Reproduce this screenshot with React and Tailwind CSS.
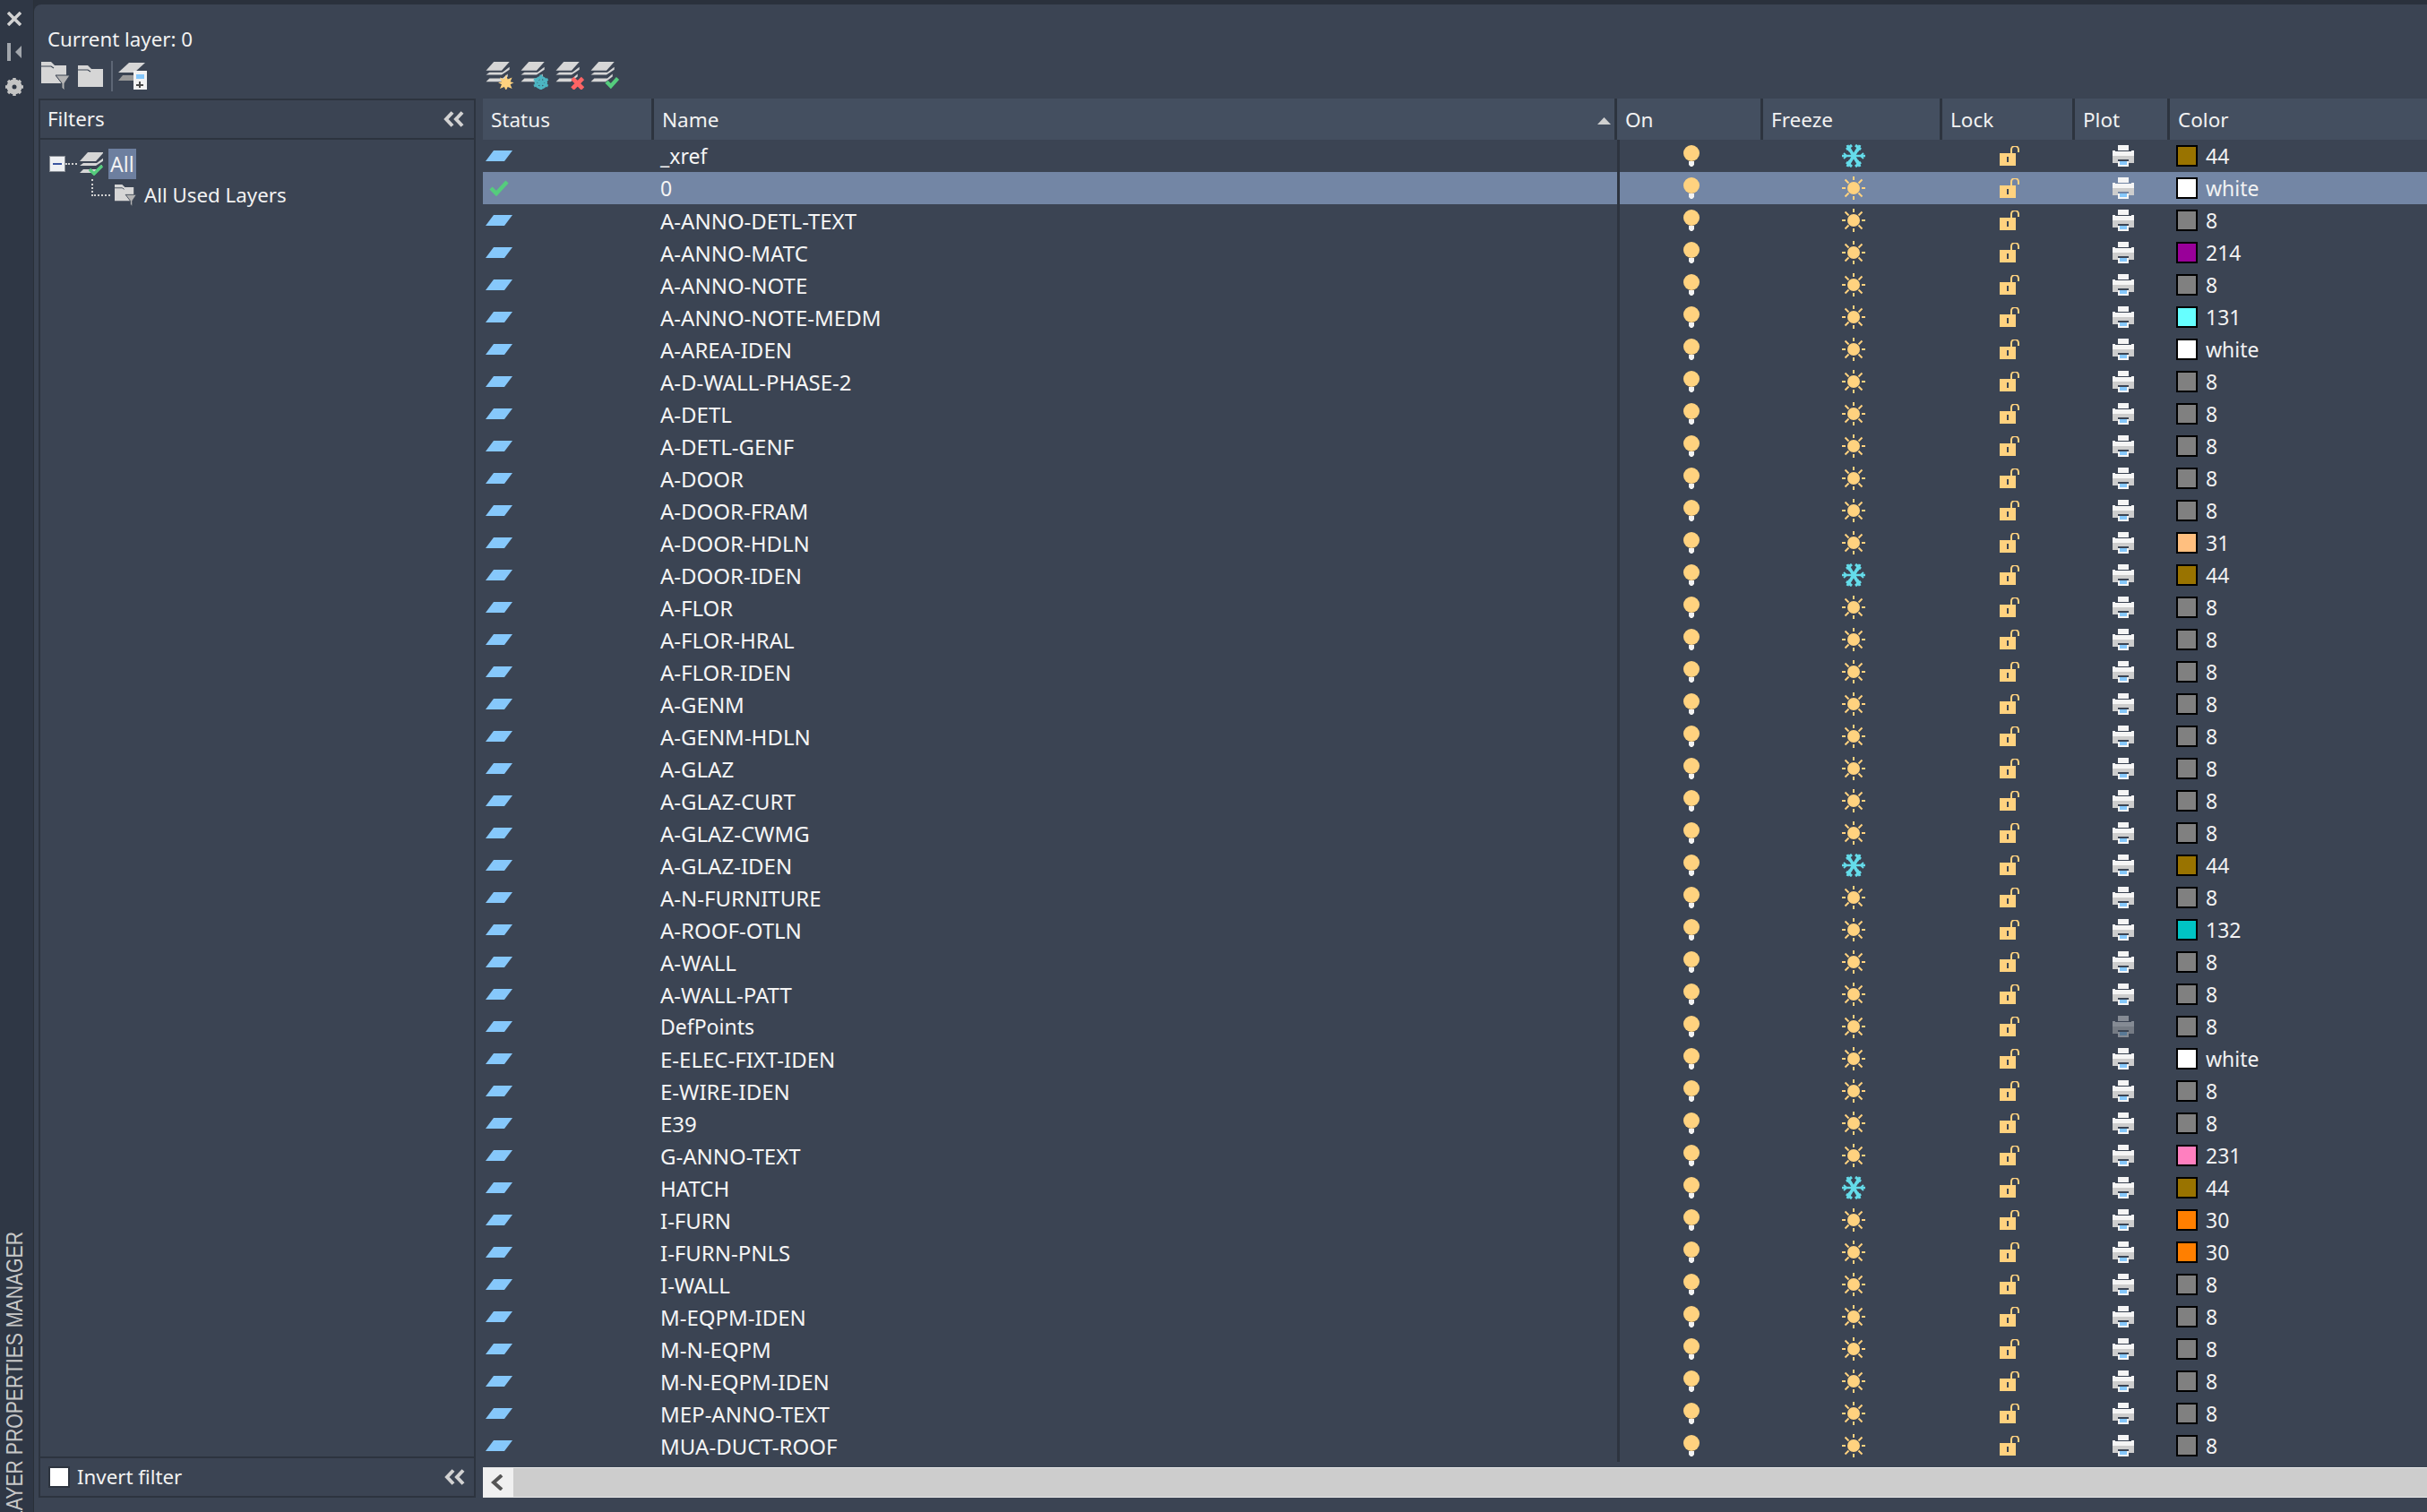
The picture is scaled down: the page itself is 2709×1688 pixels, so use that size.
const rows = [
  ["_xref", "44", true],
  ["0", "white"],
  ["A-ANNO-DETL-TEXT", "8"],
  ["A-ANNO-MATC", "214"],
  ["A-ANNO-NOTE", "8"],
  ["A-ANNO-NOTE-MEDM", "131"],
  ["A-AREA-IDEN", "white"],
  ["A-D-WALL-PHASE-2", "8"],
  ["A-DETL", "8"],
  ["A-DETL-GENF", "8"],
  ["A-DOOR", "8"],
  ["A-DOOR-FRAM", "8"],
  ["A-DOOR-HDLN", "31"],
  ["A-DOOR-IDEN", "44", true],
  ["A-FLOR", "8"],
  ["A-FLOR-HRAL", "8"],
  ["A-FLOR-IDEN", "8"],
  ["A-GENM", "8"],
  ["A-GENM-HDLN", "8"],
  ["A-GLAZ", "8"],
  ["A-GLAZ-CURT", "8"],
  ["A-GLAZ-CWMG", "8"],
  ["A-GLAZ-IDEN", "44", true],
  ["A-N-FURNITURE", "8"],
  ["A-ROOF-OTLN", "132"],
  ["A-WALL", "8"],
  ["A-WALL-PATT", "8"],
  ["DefPoints", "8", false, true],
  ["E-ELEC-FIXT-IDEN", "white"],
  ["E-WIRE-IDEN", "8"],
  ["E39", "8"],
  ["G-ANNO-TEXT", "231"],
  ["HATCH", "44", true],
  ["I-FURN", "30"],
  ["I-FURN-PNLS", "30"],
  ["I-WALL", "8"],
  ["M-EQPM-IDEN", "8"],
  ["M-N-EQPM", "8"],
  ["M-N-EQPM-IDEN", "8"],
  ["MEP-ANNO-TEXT", "8"],
  ["MUA-DUCT-ROOF", "8"],
];

const swatch = {
  44: "bg-[#997300]",
  8: "bg-[#808080]",
  white: "bg-white",
  214: "bg-[#990099]",
  131: "bg-[#66ffff]",
  31: "bg-[#ffbf7f]",
  132: "bg-[#00c4c4]",
  231: "bg-[#ff7fbf]",
  30: "bg-[#ff7f00]",
};

const Chevrons = () => (
  <svg width="24" height="18" viewBox="0 0 24 18" fill="none" stroke="#d2d2d2" strokeWidth="4">
    <path d="M10 1.5 3 9l7 7.5M21 1.5 14 9l7 7.5" />
  </svg>
);

const Layer = () => (
  <svg width="30" height="12" viewBox="0 0 30 12" className="shrink-0">
    <path d="M9 0h21l-9 12H0z" fill="#86c8fb" />
  </svg>
);

const Check = () => (
  <svg width="22" height="18" viewBox="0 0 22 18" fill="none" stroke="#55cc7d" strokeWidth="4.5">
    <path d="M2 9l6 6L20 2" />
  </svg>
);

const Bulb = () => (
  <svg width="18" height="24" viewBox="0 0 18 24" className="block">
    <circle cx="9" cy="9" r="9" fill="#ffd27f" />
    <path d="M6 18h6v4l-2 2H8l-2-2z" fill="#f2f2f2" />
  </svg>
);

const Sun = () => (
  <svg width="26" height="26" viewBox="0 0 26 26" className="block">
    <circle cx="13" cy="13" r="7" fill="#ffd27f" />
    <path
      d="M13 0v4M13 22v4M0 13h4M22 13h4M3.5 3.5l4 4M22.5 3.5l-4 4M3.5 22.5l4-4M22.5 22.5l-4-4"
      stroke="#ffd27f"
      strokeWidth="2"
    />
  </svg>
);

const Snow = () => (
  <svg width="26" height="26" viewBox="0 0 26 26" stroke="#64dcea" fill="none" strokeWidth="3.5" className="block">
    <path d="M0 13h26" strokeWidth="2.5" />
    <path d="M7 3l12 20M19 3 7 23" />
    <path d="M6 1l3 7M11 1 5 6M20 1l-3 7M15 1l6 5M6 25l3-7M11 25l-6-5M20 25l-3-7M15 25l6-5" strokeWidth="3" />
    <path d="M2 10l3 3-3 3M24 10l-3 3 3 3" strokeWidth="2" />
  </svg>
);

const Lock = () => (
  <svg width="22" height="22" viewBox="0 0 22 22" className="block">
    <path d="M0 8h18v14H0z" fill="#ffd27f" />
    <path d="M8 12h2v6H8z" fill="#3b4453" />
    <path d="M13 8V4a4 4 0 0 1 8 0v3" fill="none" stroke="#ffd27f" strokeWidth="2" />
  </svg>
);

const Printer = ({ dim }) => (
  <svg width="24" height="24" viewBox="0 0 24 24" className={dim ? "block opacity-40" : "block"}>
    <path d="M6 0h12v6H6z" fill="#f5f5f5" />
    <path d="M0 6h3v1h18V6h3v6H0z" fill="#f5f5f5" />
    <path d="M0 12h24v8h-6v-4H6v4H0z" fill="#cdcdcd" />
    <path d="M6 18h12v6H6z" fill="#f5f5f5" />
    <path d="M8 18h8v4H8z" fill="#86c8fb" />
  </svg>
);

// stacked layers, used by all the layer buttons
const Stack = () => (
  <>
    <path d="M9 0h18l-9 10H0z" fill="#d6d6d6" />
    <path d="M4 12h15l8-6v3l-9 6H0z" fill="#d6d6d6" />
    <path d="M4 19h15l6-5v3l-8 6H0z" fill="#d6d6d6" />
  </>
);

const LayerBtn = ({ children }) => (
  <svg width="32" height="31" viewBox="0 0 32 32" className="shrink-0">
    <Stack />
    {children}
  </svg>
);

const FilterFolder = ({ size = 33 }) => (
  <svg width={size} height={size} viewBox="0 0 33 33" className="shrink-0 block">
    <path d="M0 0h11l4 4h13v11H16l7 9H0z" fill="#d6d6d6" />
    <path d="M0 5h11l3 2" stroke="#3b4453" strokeWidth="1.2" fill="none" />
    <path d="M16 15h16l-6 9v8l-3-3v-5z" fill="#b4b4b4" stroke="#3b4453" strokeWidth="1" />
  </svg>
);

const App = () => {
  return (
    <div className="w-[2709px] h-[1688px] flex overflow-hidden bg-[#2a313c] text-[#f2f2f2] text-[23px] leading-none font-['Noto_Sans',sans-serif]">
      <aside className="w-[38px] shrink-0 bg-[#2f3745] flex flex-col items-start pl-[8px] overflow-hidden border-r border-[#293039]">
        <svg width="16" height="16" viewBox="0 0 16 16" stroke="#d2d2d2" strokeWidth="3.5" className="mt-[13px]">
          <path d="M1 1l14 14M15 1 1 15" />
        </svg>
        <svg width="16" height="20" viewBox="0 0 16 20" className="mt-[19px]" fill="#a2a6ac">
          <path d="M0 0h4v20H0zM16 3v14L9 10z" />
        </svg>
        <svg width="20" height="20" viewBox="0 0 20 20" className="mt-[19px] -ml-[2px]">
          <circle cx="10" cy="10" r="6" fill="none" stroke="#c4c4c4" strokeWidth="5" />
          <path d="M10 0v20M0 10h20M3 3l14 14M17 3 3 17" stroke="#c4c4c4" strokeWidth="3.5" />
          <circle cx="10" cy="10" r="2.5" fill="#2f3745" />
        </svg>
        <div className="mt-auto -mb-[10px] -ml-[2px] [writing-mode:vertical-rl] [transform:rotate(180deg)_scaleX(1.2)] whitespace-nowrap text-[#c8c8c8] text-[21.2px] font-['Liberation_Sans',sans-serif]">
          LAYER PROPERTIES MANAGER
        </div>
      </aside>

      <main className="flex-1 mt-[5px] bg-[#3b4453] rounded-tl-lg flex flex-col min-w-0">
        <div className="pl-[15px] pt-[28px] h-[63px] text-[22.3px]">Current layer: 0</div>
        <div className="flex flex-1 min-h-0">
          <section className="w-[501px] pl-[5px] pr-[8px] shrink-0 flex flex-col">
            <div className="flex items-start h-[32px] pl-[3px]">
              <span className="mt-[1px]"><FilterFolder /></span>
              <svg width="28" height="24" viewBox="0 0 28 24" className="shrink-0 ml-[8px] mt-[5px]">
                <path d="M0 0h11l4 4h13v20H0z" fill="#d6d6d6" />
                <path d="M0 5h11l3 2" stroke="#3b4453" strokeWidth="1.2" fill="none" />
              </svg>
              <div className="w-[2px] h-[34px] bg-[#5d6675] ml-[9px]" />
              <svg width="32" height="30" viewBox="0 0 32 30" className="ml-[6px] mt-[2px] shrink-0">
                <path d="M12 0h18L18 11H0z" fill="#d6d6d6" />
                <path d="M5 14h12v6H0z" fill="#9a9a9a" />
                <path d="M17 9h15v21H17z" fill="#f2f2f2" />
                <path d="M20 13h9v5h-9z" fill="#86c8fb" />
                <path d="M20 24h8v2h-8zM23 21h2v7h-2z" fill="#4a4a4a" />
              </svg>
            </div>
            <div className="mt-[10px] flex-1 min-h-0 flex flex-col border-2 border-[#2d343f] mb-[16px]">
              <div className="h-[44px] shrink-0 flex items-center justify-between pl-[8px] pr-[10px] border-b-2 border-[#2d343f] text-[22.3px]">
                <span>Filters</span>
                <Chevrons />
              </div>
              <div className="flex-1 min-h-0 pl-[10px] pt-[10px]">
                <div className="flex items-center h-[34px]">
                  <div className="w-[18px] h-[18px] bg-[#eef0f3] border border-[#8a8f96] flex items-center justify-center">
                    <div className="w-[10px] h-[2px] bg-[#3b56a0]" />
                  </div>
                  <div className="w-[13px] border-t-2 border-dotted border-[#d0d0d0]" />
                  <svg width="26" height="26" viewBox="0 0 26 26" className="ml-[3px] shrink-0">
                    <Stack />
                    <path d="M11 19l5 5 9-9" fill="none" stroke="#55cc7d" strokeWidth="3.5" />
                  </svg>
                  <span className="ml-[6px] h-[34px] px-[2px] flex items-center bg-[#6d7f9f]">All</span>
                </div>
                <div className="flex h-[30px] ml-[47px]">
                  <div className="w-[21px] h-[19px] border-l-2 border-b-2 border-dotted border-[#d0d0d0]" />
                  <div className="flex items-center gap-[8px] ml-[5px] mt-[6px] h-[25px] text-[22.3px]">
                    <FilterFolder size={25} />
                    <span>All Used Layers</span>
                  </div>
                </div>
              </div>
              <div className="h-[44px] shrink-0 flex items-center justify-between pl-[9px] pr-[9px] border-t-2 border-[#2d343f] text-[22.3px]">
                <label className="flex items-center gap-[8px]">
                  <span className="w-[24px] h-[24px] bg-white border-2 border-[#2d343f]" />
                  <span>Invert filter</span>
                </label>
                <Chevrons />
              </div>
            </div>
          </section>

          <section className="flex-1 min-w-0 flex flex-col">
            <div className="flex items-end gap-[7px] pl-[3px] h-[32px]">
              <LayerBtn>
                <path d="M23 15l2 5 5-2-2 5 4 1-4 2 2 5-5-2-2 4-2-4-5 2 2-5-4-2 4-1-2-5 5 2z" fill="#ffd27f" />
              </LayerBtn>
              <LayerBtn>
                <circle cx="23" cy="24" r="6" fill="none" stroke="#4cb5c2" strokeWidth="3" />
                <path d="M23 15v18M15 20l16 8M31 20l-16 8" stroke="#4cb5c2" strokeWidth="3" />
              </LayerBtn>
              <LayerBtn>
                <path d="M19 19l12 12M31 19 19 31" stroke="#ff6464" strokeWidth="5" />
              </LayerBtn>
              <LayerBtn>
                <path d="M18 23l5 5 8-9" fill="none" stroke="#55cc7d" strokeWidth="4.5" />
              </LayerBtn>
            </div>
            <div className="mt-[10px] h-[46px] shrink-0 flex bg-[#444f60] divide-x-[3px] divide-[#2d343f] text-[22.5px]">
              <div className="w-[191px] pl-[9px] pt-[3px] flex items-center">Status</div>
              <div className="w-[1075px] pl-[9px] pr-[4px] pt-[3px] flex items-center justify-between">
                <span>Name</span>
                <svg width="15" height="8" viewBox="0 0 15 8"><path d="M7.5 0 15 8H0z" fill="#d0d0d0" /></svg>
              </div>
              <div className="w-[163px] pl-[9px] pt-[3px] flex items-center">On</div>
              <div className="w-[200px] pl-[9px] pt-[3px] flex items-center">Freeze</div>
              <div className="w-[148px] pl-[9px] pt-[3px] flex items-center">Lock</div>
              <div className="w-[106px] pl-[9px] pt-[3px] flex items-center">Plot</div>
              <div className="flex-1 pl-[9px] pt-[3px] flex items-center">Color</div>
            </div>
            <div className="flex-1 min-h-0 overflow-hidden">
              {rows.map(([name, color, frozen, noPlot]) => {
                const current = name === "0";
                const caps = name.length > 1 && name === name.toUpperCase();
                return (
                  <div key={name} className={`h-[36px] flex items-center ${current ? "bg-[#7386a5]" : ""}`}>
                    <div className="w-[198px] pl-[3px] shrink-0 flex items-center">
                      {current ? <span className="pl-[4px]"><Check /></span> : <Layer />}
                    </div>
                    <div className={`w-[1068px] shrink-0 pt-[1px] text-[#f5f5f5] ${caps ? "text-[24px]" : ""}`}>{name}</div>
                    <div className="w-[3px] h-[36px] shrink-0 bg-[#2d343f]" />
                    <div className="w-[160px] shrink-0 flex justify-center">
                      <Bulb />
                    </div>
                    <div className="w-[200px] shrink-0 flex justify-center pl-[2px]">
                      {frozen ? <Snow /> : <Sun />}
                    </div>
                    <div className="w-[148px] shrink-0 flex justify-center pl-[2px]">
                      <Lock />
                    </div>
                    <div className="w-[106px] shrink-0 flex justify-center pl-[2px]">
                      <Printer dim={noPlot} />
                    </div>
                    <div className="flex items-center gap-[9px] pl-[7px]">
                      <span className={`w-[24px] h-[24px] border-2 border-black ${swatch[color]}`} />
                      <span className="pt-[1px]">{color}</span>
                    </div>
                  </div>
                );
              })}
            </div>
            <div className="h-[34px] mb-[16px] shrink-0 flex bg-[#cdcdcd] border-y border-[#e8e8e8]">
              <div className="w-[34px] bg-[#f0f0f0] flex items-center pl-[8px]">
                <svg width="16" height="18" viewBox="0 0 16 18" fill="none" stroke="#555" strokeWidth="4">
                  <path d="M13 1 4 9l9 8" />
                </svg>
              </div>
            </div>
          </section>
        </div>
      </main>
    </div>
  );
};

export default App;
